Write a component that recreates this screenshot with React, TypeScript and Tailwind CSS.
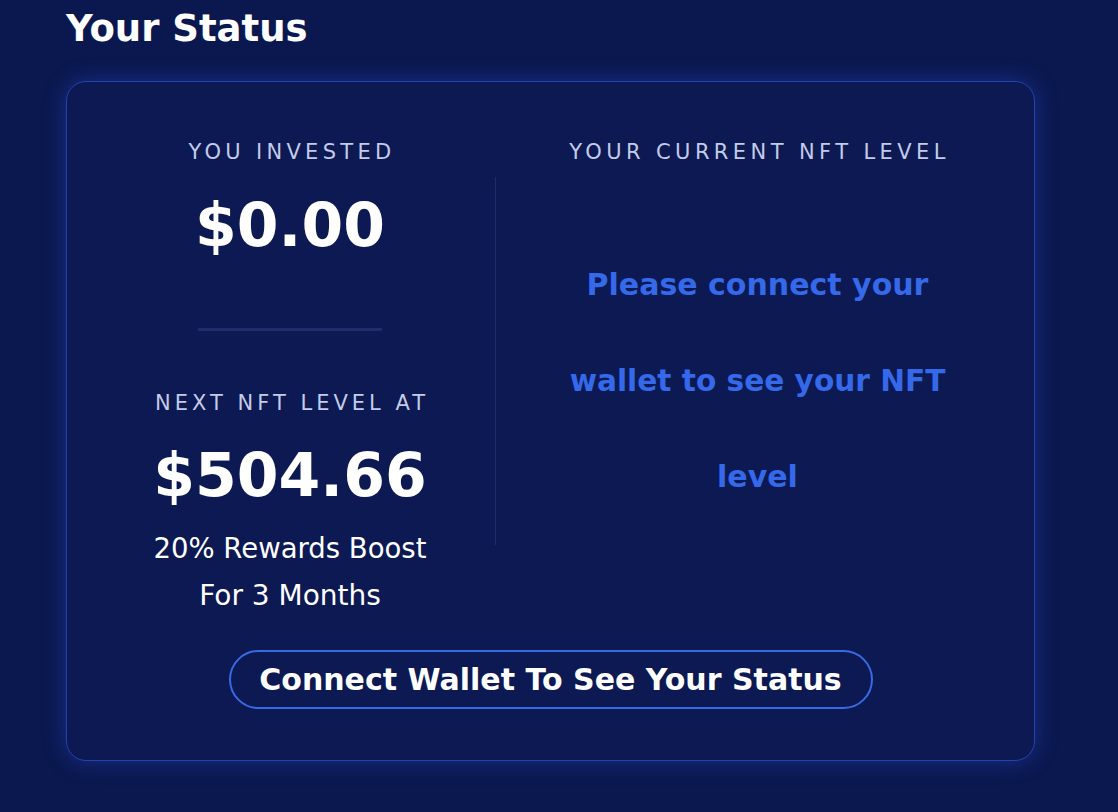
import React from "react";

export default function App() {
  const font = { fontFamily: '"DejaVu Sans", "Open Sans", sans-serif' };
  return (
    <div className="min-h-[812px] w-[1118px] bg-[#0b184f] text-white" style={font}>
      <div className="pl-[66px] pt-[6px]">
        <h1 className="text-[37px] font-bold leading-[46px]">Your Status</h1>
        <div className="mt-[29px] w-[969px] rounded-[20px] border border-[#2541ac] bg-[#0c1952] shadow-[0_0_22px_rgba(40,75,210,0.45)]">
          <div className="flex pt-[58px] pl-[18px] pr-[15px]">
            <div className="flex w-[410px] flex-col items-center">
              <div className="pl-[4px] text-[21px] leading-[24px] tracking-[4.3px] text-[#c3cbe8]">YOU INVESTED</div>
              <div className="mt-[25px] text-[60px] font-bold leading-[72px]">$0.00</div>
              <div className="mt-[67px] h-[3px] w-[184px] bg-[#1e2d6c]" />
              <div className="mt-[60px] pl-[4px] text-[21px] leading-[24px] tracking-[4px] text-[#c3cbe8]">NEXT NFT LEVEL AT</div>
              <div className="mt-[24px] text-[60px] font-bold leading-[72px]">$504.66</div>
              <div className="mt-[13px] text-[27.5px] leading-[48px]">20% Rewards Boost</div>
              <div className="text-[28px] leading-[48px]">For 3 Months</div>
            </div>
            <div className="mt-[37px] h-[368px] w-px bg-[#1e2d68]" />
            <div className="flex flex-1 flex-col items-center">
              <div className="pl-[4px] text-[21px] leading-[24px] tracking-[4.4px] text-[#c3cbe8]">YOUR CURRENT NFT LEVEL</div>
              <div className="mt-[73px] w-[440px] text-center text-[30px] font-bold leading-[96px] text-[#3569ea]">
                Please connect your
                <br />
                <span className="text-[29.6px]">wallet to see your NFT</span>
                <br />
                level
              </div>
            </div>
          </div>
          <div className="flex justify-center pt-[30px] pb-[51px]">
            <button className="h-[59px] w-[644px] rounded-full border-2 border-[#3a69e4] text-[30px] font-bold text-white">
              Connect Wallet To See Your Status
            </button>
          </div>
        </div>
      </div>
    </div>
  );
}
